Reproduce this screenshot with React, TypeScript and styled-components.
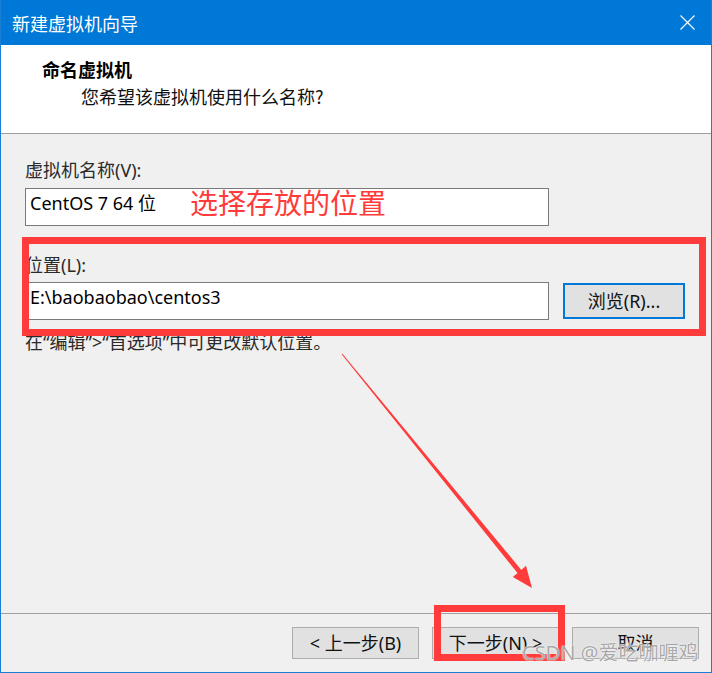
import React from "react";
import styled, { createGlobalStyle } from "styled-components";

const Global = createGlobalStyle`
  html, body { margin: 0; padding: 0; background: #f0f0f0; }
  * { box-sizing: border-box; }
`;

const UI_FONT = `"Noto Sans", "Noto Sans CJK SC", sans-serif`;
const RED = "#ff3b3b";

const Window = styled.div`
  position: relative;
  width: 712px;
  height: 673px;
  display: flex;
  flex-direction: column;
  background: #f0f0f0;
  border: 1px solid #1a80d6;
  border-top: none;
  font-family: ${UI_FONT};
  overflow: hidden;
`;

const TitleBar = styled.div`
  height: 45px;
  margin: 0 -1px;
  background: #0078d7;
  display: flex;
  align-items: center;
  justify-content: space-between;
  padding: 0 17px 0 12px;
  flex-shrink: 0;
`;

const TitleText = styled.span`
  color: #fff;
  font-family: "Noto Sans CJK SC", sans-serif;
  font-size: 18px;
  line-height: 24px;
`;

const CloseIcon = styled.svg`
  display: block;
`;

const Header = styled.div`
  height: 89px;
  background: #fff;
  border-bottom: 1px solid #a0a0a0;
  padding: 12px 0 0 41px;
  flex-shrink: 0;
`;

const HeaderTitle = styled.div`
  font-family: "Noto Sans CJK SC", sans-serif;
  font-weight: 700;
  font-size: 18px;
  line-height: 24px;
  color: #000;
`;

const HeaderSub = styled.div`
  margin: 3px 0 0 39px;
  font-family: "Noto Sans CJK SC", "Noto Sans", sans-serif;
  font-size: 18px;
  line-height: 24px;
  color: #111;
`;

const Body = styled.div`
  flex: 1;
  padding: 24px 24px 0 24px;
  display: flex;
  flex-direction: column;
`;

const Label = styled.div<{ $mt?: number }>`
  margin-top: ${(p) => p.$mt ?? 0}px;
  font-size: 18px;
  line-height: 24px;
  color: #2a2a2a;
`;

const Row = styled.div<{ $mt?: number }>`
  margin-top: ${(p) => p.$mt ?? 0}px;
  display: flex;
  align-items: center;
  gap: 14px;
`;

const TextBox = styled.div`
  width: 524px;
  height: 38px;
  background: #fff;
  border: 1px solid #7a7a7a;
  padding: 2px 4px;
  font-size: 18px;
  line-height: 24px;
  color: #000;
  white-space: nowrap;
`;

const Button = styled.button<{ $focused?: boolean }>`
  width: ${(p) => (p.$focused ? 122 : 127)}px;
  height: ${(p) => (p.$focused ? 36 : 32)}px;
  background: #e1e1e1;
  border: ${(p) => (p.$focused ? "2px solid #0078d7" : "1px solid #adadad")};
  font-family: ${UI_FONT};
  font-size: 18px;
  line-height: 24px;
  color: #111;
  padding: 0;
  display: flex;
  align-items: center;
  justify-content: center;
  white-space: nowrap;
`;

const Hint = styled.div`
  margin-top: 10px;
  font-size: 18px;
  line-height: 24px;
  color: #2a2a2a;
`;

const Footer = styled.div`
  height: 59px;
  border-top: 1px solid #a0a0a0;
  display: flex;
  justify-content: flex-end;
  align-items: flex-start;
  gap: 13px;
  padding: 13px 12px 0 0;
  flex-shrink: 0;
`;

/* annotation overlays drawn on top of the dialog */
const RedFrame = styled.div<{ $l: number; $t: number; $w: number; $h: number }>`
  position: absolute;
  left: ${(p) => p.$l}px;
  top: ${(p) => p.$t}px;
  width: ${(p) => p.$w}px;
  height: ${(p) => p.$h}px;
  border: 7px solid ${RED};
  pointer-events: none;
`;

const AnnotText = styled.div`
  position: absolute;
  left: 189px;
  top: 186px;
  font-family: "Noto Sans CJK SC", sans-serif;
  font-size: 28px;
  line-height: 32px;
  color: ${RED};
  white-space: nowrap;
`;

const ArrowSvg = styled.svg`
  position: absolute;
  left: 0;
  top: 0;
  pointer-events: none;
`;

const Watermark = styled.div`
  position: absolute;
  left: 521px;
  top: 640px;
  font-family: "Noto Sans", "Noto Sans CJK SC", sans-serif;
  font-size: 20px;
  line-height: 26px;
  color: rgba(140, 140, 140, 0.75);
  text-shadow: 0 0 2px #fff, 0 0 1px #fff;
  white-space: nowrap;
`;

export default function App() {
  return (
    <>
      <Global />
      <Window>
        <TitleBar>
          <TitleText>新建虚拟机向导</TitleText>
          <CloseIcon width="15" height="15" viewBox="0 0 15 15">
            <path d="M0.5 0.5 L14.5 14.5 M14.5 0.5 L0.5 14.5" stroke="#fff" strokeWidth="1.2" />
          </CloseIcon>
        </TitleBar>
        <Header>
          <HeaderTitle>命名虚拟机</HeaderTitle>
          <HeaderSub>您希望该虚拟机使用什么名称?</HeaderSub>
        </Header>
        <Body>
          <Label>虚拟机名称(V):</Label>
          <Row $mt={6}>
            <TextBox>CentOS 7 64 位</TextBox>
          </Row>
          <Label $mt={27}>位置(L):</Label>
          <Row $mt={5}>
            <TextBox>E:\baobaobao\centos3</TextBox>
            <Button $focused>浏览(R)...</Button>
          </Row>
          <Hint>在“编辑”&gt;“首选项”中可更改默认位置。</Hint>
        </Body>
        <Footer>
          <Button>&lt; 上一步(B)</Button>
          <Button>下一步(N) &gt;</Button>
          <Button>取消</Button>
        </Footer>

        <AnnotText>选择存放的位置</AnnotText>
        <RedFrame $l={21} $t={237} $w={684} $h={99} />
        <RedFrame $l={433} $t={605} $w={131} $h={56} />
        <ArrowSvg width="712" height="673" viewBox="0 0 712 673">
          <polygon
            points="340.6,354.3 516.5,573.1 511.8,577 531,588 525,565.8 520.3,569.9 341.4,353.7"
            fill={RED}
          />
        </ArrowSvg>
        <Watermark>CSDN @爱吃咖喱鸡</Watermark>
      </Window>
    </>
  );
}
